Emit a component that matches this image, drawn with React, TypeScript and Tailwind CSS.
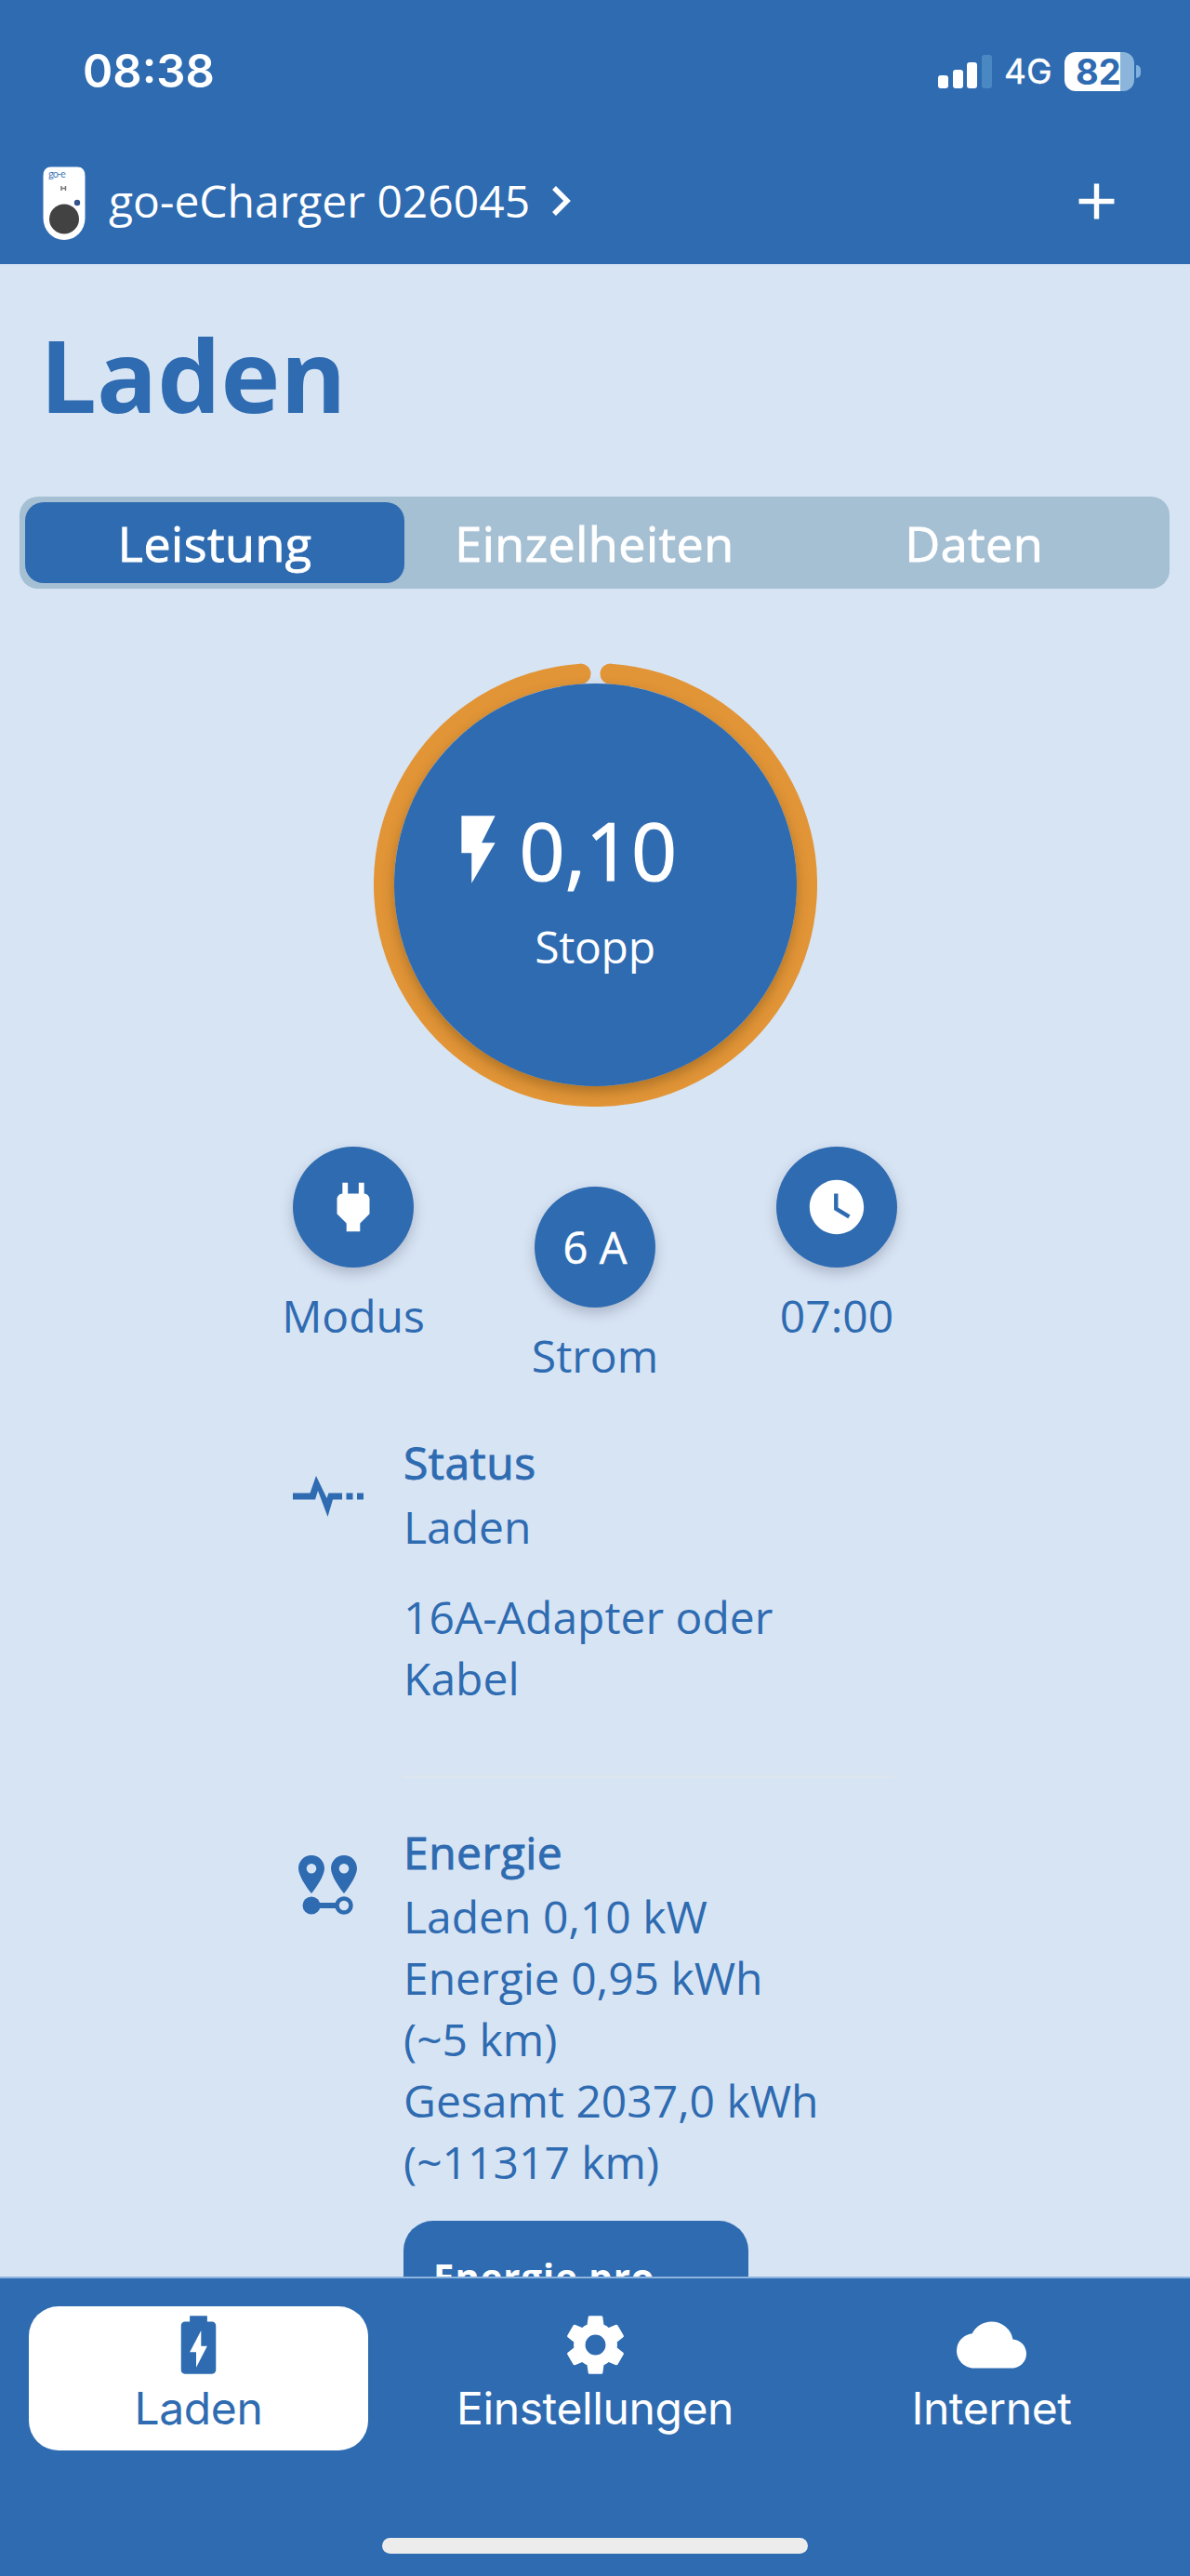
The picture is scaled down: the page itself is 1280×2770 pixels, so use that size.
import type { ReactNode } from "react";
import { MdAdd, MdCloud, MdFlashOn, MdPower, MdWatchLater } from "react-icons/md";

const tabs = ["Leistung", "Einzelheiten", "Daten"];

const StatusBar = () => {
  return (
    <div className="flex h-[153px] items-center justify-between pl-[89px] pr-[53px] font-[Inter,sans-serif]">
      <p className="text-[49px] font-semibold leading-none">08:38</p>

      <div className="flex items-center">
        <div className="mr-[10px] flex h-[36px] items-end gap-[4.6px]">
          <span className="h-[14px] w-[11px] rounded-[3px] bg-white" />
          <span className="h-[20px] w-[11px] rounded-[3px] bg-white" />
          <span className="h-[28px] w-[11px] rounded-[3px] bg-white" />
          <span className="h-[36px] w-[11px] rounded-[3px] bg-[#4a88c3]" />
        </div>
        <span className="w-[68px] pl-[3px] text-[37px] leading-none [-webkit-text-stroke:0.4px]">4G</span>
        <div className="flex h-[42px] w-[75px] items-center rounded-[12px] bg-[linear-gradient(90deg,#fff_60px,#8bb5db_60px)] pl-[12px] text-[38px] font-bold leading-none text-[#2e6bb1]">
          82
        </div>
        <span className="ml-[2px] h-[14px] w-[5px] rounded-r-full bg-[#7fb0e0]" />
      </div>
    </div>
  );
};

const ChargerIcon = () => (
  <svg className="mt-[6px]" width="46" height="80" viewBox="0 0 46 80">
    <path d="M9 0.5H37Q45.500 0.500 45.500 10V56A22.500 23 0 0 1 0.500 56V10Q0.500 0.500 9 0.500Z" fill="#fff" />
    <text x="6" y="12" fontSize="11" letterSpacing="-1" fill="#3f79b8" fontFamily="Lato, sans-serif">go-e</text>
    <path d="M20 21v5M24.500 21v5M20 23.500h4.500" stroke="#777" strokeWidth="1.500" />
    <circle cx="37" cy="39" r="3.200" fill="#34558a" />
    <circle cx="23" cy="56.500" r="16" fill="#424243" />
  </svg>
);

const PulseIcon = () => (
  <svg width="78" height="44" viewBox="0 0 78 44" fill="currentColor">
    <path d="M0 18.500H18.500L25 0L36.500 24L38.500 18.500H53V25.500H43L37.500 44L27 16L24 25.500H0Z" />
    <path d="M57.500 18.500h7V25.500h-7zM69 18.500h7V25.500h-7z" />
  </svg>
);

const RouteIcon = () => (
  <svg width="64" height="64" viewBox="0 0 64 64" fill="currentColor">
    <path
      fillRule="evenodd"
      d="M14 0C6.300 0 0 6.200 0 14C0 24 14 41 14 41S28 24 28 14C28 6.200 21.700 0 14 0ZM14 9A5.300 5.300 0 1 1 14 19.600A5.300 5.300 0 1 1 14 9Z"
    />
    <path
      fillRule="evenodd"
      d="M49 0C41.300 0 35 6.200 35 14C35 24 49 41 49 41S63 24 63 14C63 6.200 56.700 0 49 0ZM49 9A5.300 5.300 0 1 1 49 19.600A5.300 5.300 0 1 1 49 9Z"
    />
    <circle cx="14" cy="54" r="9.500" />
    <path d="M14 51h27v6H14z" />
    <circle cx="49" cy="54" r="7.500" fill="none" stroke="currentColor" strokeWidth="4.500" />
  </svg>
);

const BatteryIcon = () => (
  <svg className="size-[75px]" viewBox="0 0 24 24" fill="currentColor">
    <path d="M16.67 4H15V2H9v2H7.330A1.330 1.330 0 0 0 6 5.330v15.330C6 21.400 6.600 22 7.330 22h9.330c.74 0 1.340-.6 1.340-1.330V5.330C18 4.600 17.400 4 16.670 4M11.200 19.800V14.500H9L12.900 7v5.400H15z" />
  </svg>
);

const CogIcon = () => (
  <svg className="size-[75px]" viewBox="0 0 24 24" fill="currentColor">
    <path d="M12 15.500A3.500 3.500 0 0 1 8.500 12A3.500 3.500 0 0 1 12 8.500A3.500 3.500 0 0 1 15.500 12A3.500 3.500 0 0 1 12 15.500M19.430 12.970C19.470 12.650 19.500 12.330 19.500 12C19.500 11.670 19.470 11.340 19.430 11L21.540 9.370C21.730 9.220 21.780 8.950 21.660 8.730L19.660 5.270C19.540 5.050 19.270 4.960 19.050 5.050L16.560 6.050C16.040 5.660 15.500 5.320 14.870 5.070L14.500 2.420C14.460 2.180 14.250 2 14 2H10C9.750 2 9.540 2.180 9.500 2.420L9.130 5.070C8.500 5.320 7.960 5.660 7.440 6.050L4.950 5.050C4.730 4.960 4.460 5.050 4.340 5.270L2.340 8.730C2.210 8.950 2.270 9.220 2.460 9.370L4.570 11C4.530 11.340 4.500 11.670 4.500 12C4.500 12.330 4.530 12.650 4.570 12.970L2.460 14.630C2.270 14.780 2.210 15.050 2.340 15.270L4.340 18.730C4.460 18.950 4.730 19.030 4.950 18.950L7.440 17.940C7.960 18.340 8.500 18.680 9.130 18.930L9.500 21.580C9.540 21.820 9.750 22 10 22H14C14.250 22 14.460 21.820 14.500 21.580L14.870 18.930C15.500 18.670 16.040 18.340 16.560 17.940L19.050 18.950C19.270 19.030 19.540 18.950 19.660 18.730L21.660 15.270C21.780 15.050 21.730 14.780 21.540 14.630L19.430 12.970Z" />
  </svg>
);

const Header = () => {
  return (
    <header className="h-[284px] shrink-0 bg-[#2e6bb1] text-white">
      <StatusBar />
      <div className="flex h-[126px] items-center pl-[46px] pr-[68px]">
        <ChargerIcon />
        <p className="ml-[25px] text-[48px] leading-none">go-eCharger 026045</p>
        <svg className="ml-[22px]" width="24" height="36" viewBox="0 0 24 36" fill="none">
          <path d="M4 4l14 14L4 32" stroke="currentColor" strokeWidth="5.500" />
        </svg>
        <MdAdd className="ml-auto size-[65px]" />
      </div>
    </header>
  );
};

const ChargeButton = () => {
  return (
    <div className="relative mx-auto mt-[80px] size-[477px]">
      <svg className="absolute inset-0" width="477" height="477" viewBox="0 0 477 477" fill="none">
        <path d="M254.500 11.600A227.500 227.500 0 1 1 222.500 11.600" stroke="#e29537" strokeWidth="22" strokeLinecap="round" />
      </svg>
      <button className="absolute inset-[22px] rounded-full bg-[#2e6bb1] text-white shadow-[0_6px_14px_rgba(60,40,0,0.32)]">
        <span className="mt-[8px] flex items-center pl-[47px]">
          <MdFlashOn className="size-[87px]" />
          <span className="ml-px text-[86px] leading-[100px] [-webkit-text-stroke:1.2px]">0,10</span>
        </span>
        <span className="mt-[24px] block text-[48px] leading-[60px] tracking-[-0.3px]">Stopp</span>
      </button>
    </div>
  );
};

type RoundButtonProps = {
  label: string;
  children: ReactNode;
};

const RoundButton = ({ label, children }: RoundButtonProps) => (
  <div className="flex w-[260px] flex-col items-center">
    <button className="flex size-[130px] items-center justify-center rounded-full bg-[#2e6bb1] text-[47px] text-white shadow-[0_6px_14px_rgba(60,70,90,0.28)] [-webkit-text-stroke:0.5px]">
      {children}
    </button>
    <p className="mt-[19px] text-[48px] leading-[65px]">{label}</p>
  </div>
);

const BottomNav = () => {
  return (
    <nav className="flex h-[322px] shrink-0 flex-col items-center border-t-2 border-[#8db4de] bg-[#2e6bb1] font-[Inter,sans-serif] text-[48px] tracking-[-0.4px] text-white">
      <div className="flex w-full pt-[30px]">
        <div className="w-[427px] pl-[31px]">
          <div className="flex h-[155px] w-[365px] flex-col items-center rounded-[32px] bg-white pt-[4px] text-[#2e6bb1]">
            <BatteryIcon />
            <span className="mt-px leading-[60px]">Laden</span>
          </div>
        </div>
        <div className="flex w-[426px] flex-col items-center pt-[4px]">
          <CogIcon />
          <span className="mt-px leading-[60px]">Einstellungen</span>
        </div>
        <div className="flex w-[427px] flex-col items-center pt-[4px]">
          <MdCloud className="size-[75px]" />
          <span className="mt-px leading-[60px]">Internet</span>
        </div>
      </div>
      <div className="mb-[24px] mt-auto h-[17px] w-[458px] rounded-full bg-[#ececec]" />
    </nav>
  );
};

export default function App() {
  return (
    <div className="flex h-[2770px] w-[1280px] flex-col overflow-hidden bg-[#d7e4f4] font-['Open_Sans',sans-serif] text-[#2e6bb1]">
      <Header />

      <main className="min-h-0 flex-1 overflow-hidden">
        <h1 className="pl-[43px] pt-[59px] text-[108px] font-bold leading-[120px]">Laden</h1>

        <div className="mr-[22px] ml-[21px] mt-[71px] flex h-[99px] rounded-[20px] bg-[#a5bfd3] p-[6px] text-[52px] tracking-[0.5px] text-white [-webkit-text-stroke:0.9px]">
          {tabs.map((tab, i) => (
            <button
              key={tab}
              className={`flex-1 rounded-[20px] leading-none ${i === 0 ? "bg-[#2e6bb1]" : ""}`}
            >
              {tab}
            </button>
          ))}
        </div>

        <ChargeButton />

        <div className="mt-[43px] flex justify-center">
          <RoundButton label="Modus">
            <MdPower className="size-[70px]" strokeWidth={0} />
          </RoundButton>
          <div className="pt-[43px]">
            <RoundButton label="Strom">6 A</RoundButton>
          </div>
          <RoundButton label="07:00">
            <MdWatchLater className="size-[70px]" strokeWidth={0} />
          </RoundButton>
        </div>

        <div className="mt-[50px] flex pl-[315px] text-[48px] leading-[66px]">
          <div className="w-[119px] pt-[47px]">
            <PulseIcon />
          </div>
          <div className="w-[528px] border-b-[3px] border-[#dde5ee] pb-[71px]">
            <p className="tracking-[0.5px] [-webkit-text-stroke:0.9px]">Status</p>
            <p className="mt-[3px]">Laden</p>
            <p className="mt-[31px]">
              16A-Adapter oder
              <br />
              Kabel
            </p>
          </div>
        </div>

        <div className="mt-[47px] flex pl-[321px] text-[48px] leading-[66px]">
          <div className="w-[113px] pt-[36px]">
            <RouteIcon />
          </div>
          <div>
            <p className="tracking-[0.5px] [-webkit-text-stroke:0.9px]">Energie</p>
            <p className="mt-[3px]">Laden 0,10 kW</p>
            <p>Energie 0,95 kWh</p>
            <p>(~5 km)</p>
            <p>Gesamt 2037,0 kWh</p>
            <p>(~11317 km)</p>
            <button className="mt-[30px] h-[150px] w-[371px] rounded-[32px] bg-[#2e6bb1] pb-[60px] pl-[32px] pt-[30px] text-left align-top text-[40px] font-bold leading-[60px] tracking-[1px] text-white">
              Energie pro
            </button>
          </div>
        </div>
      </main>

      <BottomNav />
    </div>
  );
}
